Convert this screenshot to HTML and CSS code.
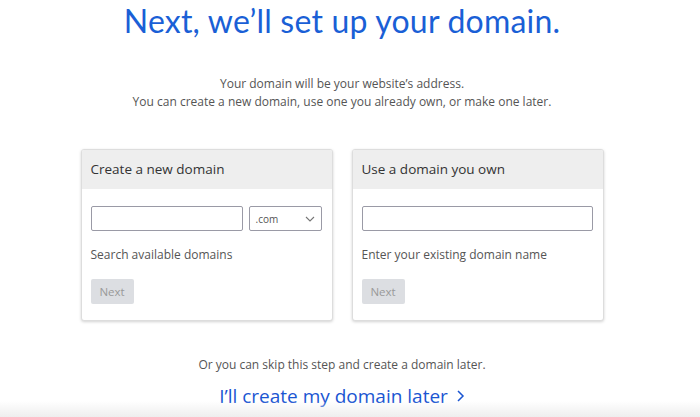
FILE: index.html
```html
<!DOCTYPE html>
<html>
<head>
<meta charset="utf-8">
<link rel="stylesheet" href="styles.css">
</head>
<body>
<main class="page">
  <h1 class="title">Next, we’ll set up your domain.</h1>
  <p class="intro">Your domain will be your website’s address.<br>You can create a new domain, use one you already own, or make one later.</p>
  <div class="cards">
    <section class="card">
      <div class="card-head">Create a new domain</div>
      <div class="card-body">
        <div class="row">
          <input class="field short" type="text">
          <div class="select"><span>.com</span>
            <svg width="10" height="6" viewBox="0 0 10 6"><path d="M1 1l4 4 4-4" fill="none" stroke="#777" stroke-width="1.1"/></svg>
          </div>
        </div>
        <p class="hint">Search available domains</p>
        <button class="btn">Next</button>
      </div>
    </section>
    <section class="card">
      <div class="card-head">Use a domain you own</div>
      <div class="card-body">
        <div class="row">
          <input class="field" type="text">
        </div>
        <p class="hint">Enter your existing domain name</p>
        <button class="btn">Next</button>
      </div>
    </section>
  </div>
  <p class="skip">Or you can skip this step and create a domain later.</p>
  <a class="later" href="#">I’ll create my domain later <svg width="9" height="14" viewBox="0 0 9 14"><path d="M2 2l5 5-5 5" fill="none" stroke="#1a55d2" stroke-width="1.5"/></svg></a>
</main>
<div class="fade"></div>
</body>
</html>
```
FILE: styles.css
```css
html, body { margin: 0; padding: 0; background: #fff; }
body { width: 700px; height: 417px; overflow: hidden; position: relative; font-family: "Open Sans", sans-serif; }
.page { width: 684px; display: flex; flex-direction: column; align-items: center; }
.title { margin: 0; padding-top: 2px; font-family: "Lato", sans-serif; font-weight: 400; font-size: 32px; line-height: 38px; color: #1a5fd6; letter-spacing: 0.2px; }
.intro { margin: 35px 0 0; text-align: center; font-size: 12px; line-height: 18px; color: #555; }
.cards { display: flex; gap: 19px; margin-top: 38px; }
.card { width: 250px; height: 170px; border: 1px solid #ddd; border-radius: 3px; box-shadow: 0 1px 3px rgba(0,0,0,0.18); background: #fff; overflow: hidden; }
.card-head { height: 39px; background: #eee; font-size: 13.5px; line-height: 39px; padding-left: 9px; color: #333; }
.card-body { padding: 17px 10px 0 9px; }
.row { display: flex; gap: 6px; }
.field { box-sizing: border-box; height: 25px; flex: 1; margin: 0; border: 1px solid #9a9aa6; border-radius: 2px; padding: 0; }
.field.short { flex: 0 0 152px; width: 152px; }
.select { box-sizing: border-box; flex: 0 0 73px; height: 25px; border: 1px solid #9a9aa6; border-radius: 2px; display: flex; align-items: center; justify-content: space-between; padding: 0 6px 0 6px; font-size: 10px; color: #555; }
.hint { margin: 15px 0 0; font-size: 12px; line-height: 18px; color: #555; }
.btn { margin-top: 15px; width: 43px; height: 25px; border: 0; border-radius: 2px; background: #dcdee2; color: #999; font-family: "Open Sans", sans-serif; font-size: 11.5px; padding: 0; }
.skip { margin: 35px 0 0; font-size: 12px; line-height: 18px; color: #555; }
.later { margin-top: 9px; font-size: 19px; line-height: 26px; color: #1a55d2; text-decoration: none; display: flex; align-items: center; gap: 8px; }
.fade { position: absolute; left: 0; right: 0; bottom: 0; height: 16px; background: linear-gradient(rgba(238,238,238,0), rgba(238,238,238,1)); pointer-events: none; }
```
